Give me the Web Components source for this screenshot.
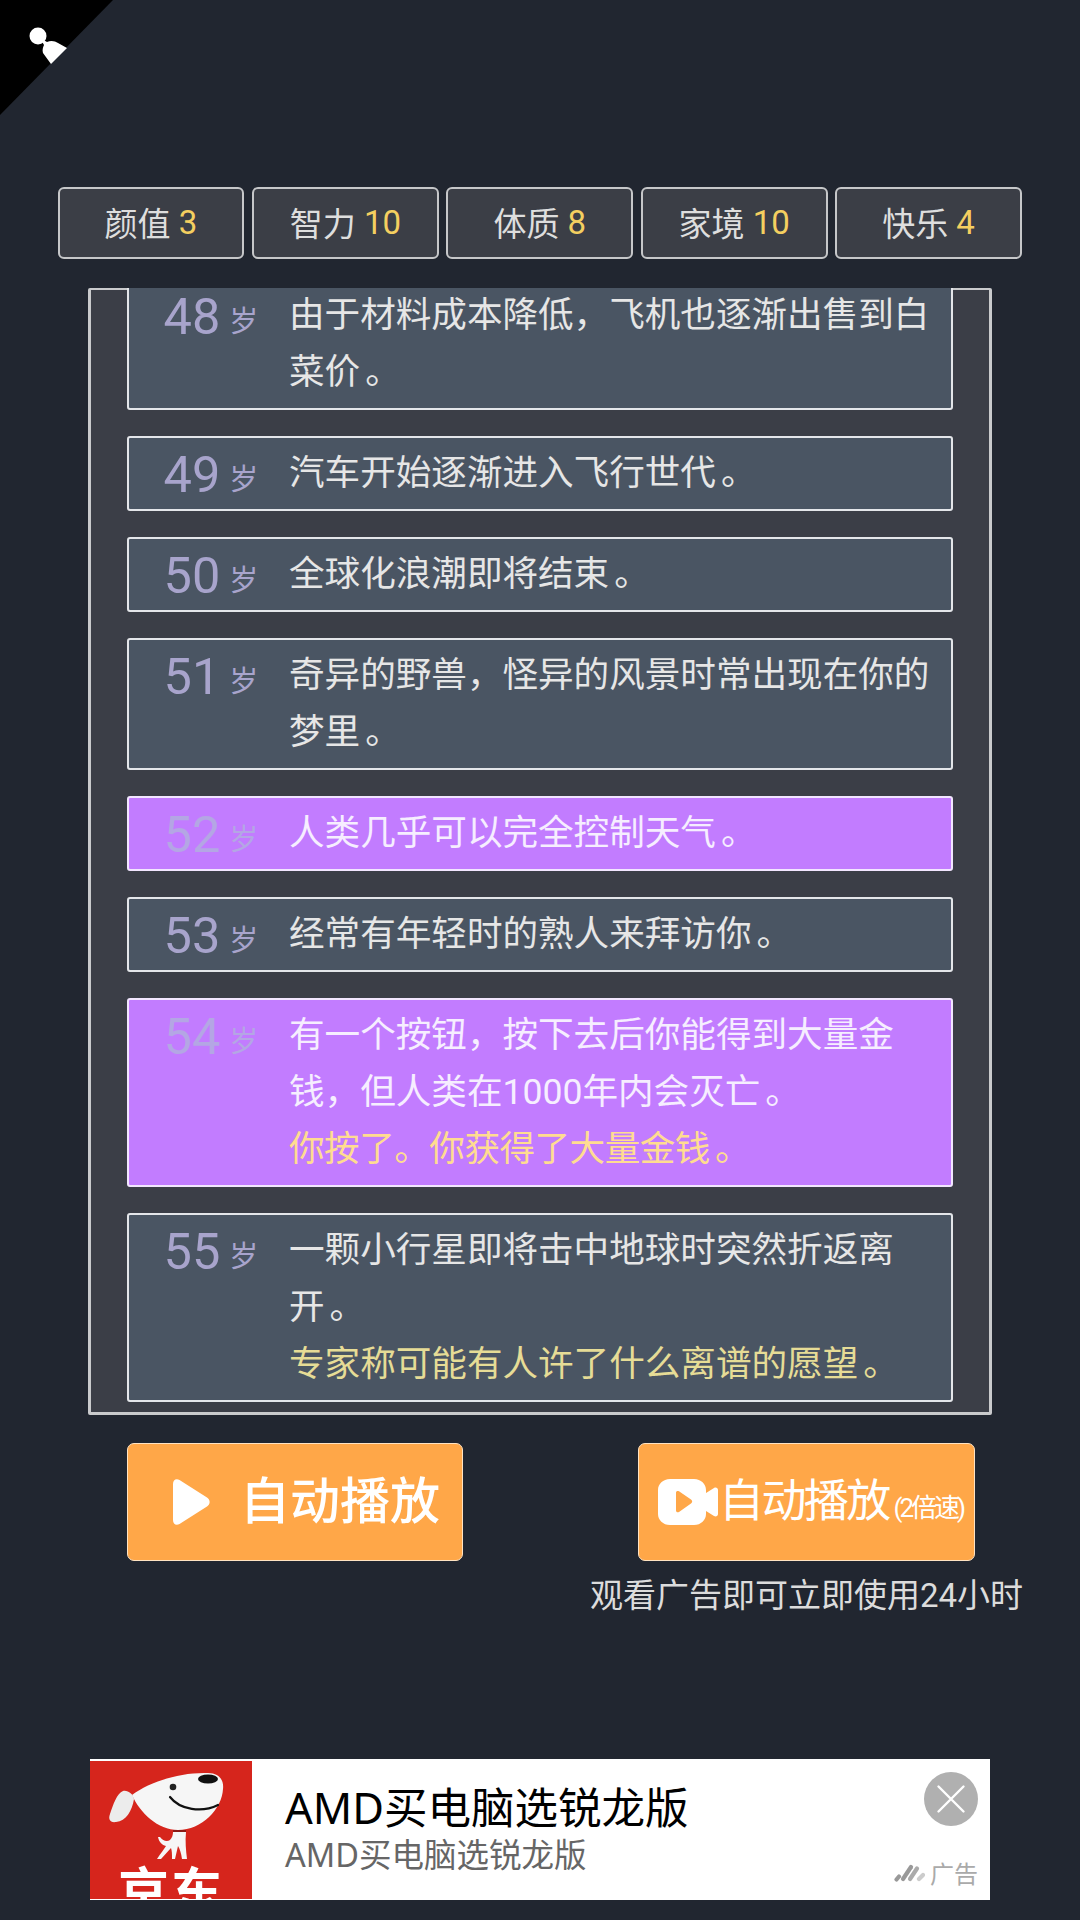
<!DOCTYPE html>
<html lang="zh">
<head>
<meta charset="utf-8">
<title>人生重开</title>
<style>
html, body { margin: 0; background: #212630; }
body { font-family: Roboto, "Noto Sans CJK SC", sans-serif; color: #e8e8e8; }
life-entry i { font-style: normal; margin-left: 5px; }
life-entry .tight { letter-spacing: -0.5px; }
</style>
</head>
<body>
<life-app>
  <life-corner slot="corner"></life-corner>
  <life-trait slot="traits" label="颜值" value="3"></life-trait>
  <life-trait slot="traits" label="智力" value="10"></life-trait>
  <life-trait slot="traits" label="体质" value="8"></life-trait>
  <life-trait slot="traits" label="家境" value="10"></life-trait>
  <life-trait slot="traits" label="快乐" value="4"></life-trait>
  <life-entry slot="log" age="48">由于材料成本降低，飞机也逐渐出售到白菜价<i>。</i></life-entry>
  <life-entry slot="log" age="49">汽车开始逐渐进入飞行世代<i>。</i></life-entry>
  <life-entry slot="log" age="50">全球化浪潮即将结束<i>。</i></life-entry>
  <life-entry slot="log" age="51">奇异的野兽，怪异的风景时常出现在你的梦里<i>。</i></life-entry>
  <life-entry slot="log" age="52" rare>人类几乎可以完全控制天气<i>。</i></life-entry>
  <life-entry slot="log" age="53">经常有年轻时的熟人来拜访你<i>。</i></life-entry>
  <life-entry slot="log" age="54" rare>有一个按钮，按下去后你能得到大量金钱，但人类在1000年内会灭亡<i>。</i><span slot="extra" class="tight">你按了。你获得了大量金钱<i>。</i></span></life-entry>
  <life-entry slot="log" age="55">一颗小行星即将击中地球时突然折返离开<i>。</i><span slot="extra">专家称可能有人许了什么离谱的愿望<i>。</i></span></life-entry>
  <life-play-button slot="play">自动播放</life-play-button>
  <life-play-button slot="video" kind="video">自动播放<span slot="note">(2倍速)</span></life-play-button>
  <life-ad slot="ad"></life-ad>
</life-app>

<script>
class LifeApp extends HTMLElement {
  constructor() {
    super();
    this.attachShadow({ mode: "open" });
    this.shadowRoot.innerHTML = `<style>
:host { display: block; position: relative; width: 1080px; height: 1920px; overflow: hidden; background: #212630; }
#traits { display: grid; grid-template-columns: repeat(5, 1fr); column-gap: 7.5px; margin: 187px 58px 0 57.5px; }
#panel { box-sizing: border-box; height: 1127px; margin: 29px 88px 0 88px; border: solid #c9cacc; border-width: 2px 3px 3px 3px; border-radius: 2px; background: #3b3e47; }
#log { box-sizing: border-box; height: 1124px; margin-top: -2px; padding: 0 36px 10px 36px; display: flex; flex-direction: column; justify-content: flex-end; gap: 26px; overflow: hidden; position: relative; }
#buttons { display: flex; gap: 175px; margin: 28px 0 0 127px; }
#hint { margin: 15px 57px 0 0; text-align: right; font-size: 33px; line-height: 40px; color: #dcdcdc; }
#ad { margin-top: 143px; }
</style>
<slot name="corner"></slot>
<div id="traits"><slot name="traits"></slot></div>
<div id="panel"><div id="log"><slot name="log"></slot></div></div>
<div id="buttons"><slot name="play"></slot><slot name="video"></slot></div>
<div id="hint">观看广告即可立即使用24小时</div>
<div id="ad"><slot name="ad"></slot></div>`;
  }
}

class LifeCorner extends HTMLElement {
  constructor() {
    super();
    this.attachShadow({ mode: "open" });
    this.shadowRoot.innerHTML = `<style>
:host { position: absolute; top: 0; left: 0; width: 114px; height: 116px; display: block; }
svg { display: block; }
</style>
<svg width="114" height="116" viewBox="0 0 114 116">
  <path d="M0 0H113L0 115Z" fill="#000"/>
  <circle cx="38" cy="36" r="8.500" fill="#fff"/>
  <path d="M40 38L47 42C51 40 55 41 58 43L67 48L51 64L43 53C42 50 43 47 44 45Z" fill="#fff"/>
</svg>`;
  }
}

class LifeTrait extends HTMLElement {
  constructor() {
    super();
    this.attachShadow({ mode: "open" });
    this.shadowRoot.innerHTML = `<style>
:host { display: flex; box-sizing: border-box; height: 72px; padding-bottom: 2px; align-items: center; justify-content: center; border: 2px solid #c6c7c9; border-radius: 6px; background: #3b3e46; font-size: 33px; color: #dedede; white-space: pre; }
b { font-weight: 400; color: #f4cf60; }
</style>
<span>${this.getAttribute("label")} </span><b>${this.getAttribute("value")}</b>`;
  }
}

class LifeEntry extends HTMLElement {
  constructor() {
    super();
    const rare = this.hasAttribute("rare");
    this.attachShadow({ mode: "open" });
    this.shadowRoot.innerHTML = `<style>
:host { display: flex; flex: none; align-items: flex-start; box-sizing: border-box; border: 2px solid ${rare ? "#f2e6ff" : "#e4e6ea"}; border-radius: 3px; padding: 7px 0; background: ${rare ? "#c27cff" : "#4a5563"}; font-size: 35.600px; line-height: 57px; color: ${rare ? "#f6eeff" : "#e6e6e6"}; }
#age { flex: none; box-sizing: border-box; width: 160px; height: 57px; padding: 8.500px 0 0 34.500px; white-space: nowrap; color: ${rare ? "#b4a6e4" : "#a8a4cc"}; font-size: 29px; }
#age b { font-weight: 400; font-size: 50.500px; line-height: 0; margin-right: 9px; }
#age span { line-height: 0; vertical-align: 2px; }
#text { flex: none; width: 645px; }
::slotted([slot="extra"]) { display: block; color: ${rare ? "#ffdc90" : "#e6dc96"}; }
</style>
<div id="age"><b>${this.getAttribute("age")}</b><span>岁</span></div>
<div id="text"><slot></slot><slot name="extra"></slot></div>`;
  }
}

class LifePlayButton extends HTMLElement {
  constructor() {
    super();
    const video = this.getAttribute("kind") === "video";
    const icon = video
      ? `<svg width="60" height="46" viewBox="0 0 60 46"><path d="M12 0H36C43 0 48 5 48 11V14L56 9C58 8 60 9 60 11V35C60 37 58 38 56 37L48 32V35C48 41 43 46 36 46H12C5 46 0 41 0 35V11C0 5 5 0 12 0Z" fill="#fff"/><path d="M18 13.500C18 12 19.500 11.500 21 12.200L33 20.500C34.600 21.600 34.600 23.400 33 24.500L21 33C19.500 33.800 18 33 18 31.500Z" fill="#ffa748"/></svg>`
      : `<svg width="37" height="46" viewBox="0 0 37 46"><path d="M0 5C0 1 3 -1 6.500 1L34 18.500C37.500 20.700 37.500 25.300 34 27.500L6.500 45C3 47 0 45 0 41Z" fill="#fff"/></svg>`;
    this.attachShadow({ mode: "open" });
    this.shadowRoot.innerHTML = `<style>
:host { display: flex; box-sizing: border-box; align-items: center; width: ${video ? 337 : 336}px; height: 117.500px; padding-left: ${video ? 19 : 45}px; border: 1.5px solid #ffe3c2; border-radius: 7px; background: #ffa748; color: #fff; white-space: nowrap; }
svg { flex: none; }
#label { margin-left: ${video ? 1 : 30}px; font-size: ${video ? 45 : 50}px; font-weight: ${video ? 400 : 500}; letter-spacing: ${video ? "-2.600px" : "0"}; line-height: 1; }
::slotted([slot="note"]) { font-size: 26px; font-weight: 400; letter-spacing: -3px; margin-left: 5px; }
</style>
${icon}<span id="label"><slot></slot><slot name="note"></slot></span>`;
  }
}

class LifeAd extends HTMLElement {
  constructor() {
    super();
    this.attachShadow({ mode: "open" });
    this.shadowRoot.innerHTML = `<style>
:host { display: flex; box-sizing: border-box; width: 900px; height: 141px; margin-left: 90px; background: #fff; padding-top: 2px; overflow: hidden; }
#logo { flex: none; width: 162px; height: 138px; background: #d6251c; overflow: hidden; }
#logo svg { display: block; }
#logo div { margin-top: -3px; font: 700 51px/60px "Noto Sans CJK SC", sans-serif; color: #fff; letter-spacing: 2px; text-align: center; white-space: nowrap; }
#copy { flex: 1; padding: 18px 0 0 33px; font-family: "Noto Sans", "Noto Sans CJK SC", sans-serif; }
#title { font-size: 43.500px; line-height: 56px; color: #000; }
#sub { font-size: 32.500px; line-height: 39px; color: #666; }
#side { display: flex; flex-direction: column; align-items: flex-end; justify-content: space-between; padding: 11px 12px 11px 0; }
#close { display: block; }
#tag { display: flex; align-items: center; gap: 5px; font-size: 24px; line-height: 32px; color: #aaa; font-family: "Noto Sans CJK SC", sans-serif; }
</style>
<div id="logo">
  <svg width="162" height="100" viewBox="0 0 162 100">
    <path d="M42 34C58 22 88 11 118 12C130 12 134 20 133 28C132 48 112 69 88 69C68 69 50 52 42 34Z" fill="#f6f6f6"/>
    <path d="M33 30C38 29 43 33 44 38C42 50 36 60 26 61C20 62 18 58 20 53C23 44 27 32 33 30Z" fill="#ececec"/>
    <circle cx="83" cy="26" r="3.300" fill="#222"/>
    <ellipse cx="118" cy="18" rx="10" ry="4.500" fill="#111"/>
    <path d="M80 36C90 49 112 52 128 44" fill="none" stroke="#111" stroke-width="2.200" stroke-linecap="round"/>
    <path d="M83 70H96" stroke="#8c1a16" stroke-width="2"/>
    <path d="M83 71H96C95 80 96 90 97 98H92C91 92 90 88 88 85L85 98H82C82 93 82 90 81 87L71 98H67C71 92 74 88 76 85C72 84 69 81 68 76L70 76C73 80 77 81 80 79C82 77 83 74 83 71Z" fill="#f6f6f6"/>
  </svg>
  <div>京东</div>
</div>
<div id="copy">
  <div id="title">AMD买电脑选锐龙版</div>
  <div id="sub">AMD买电脑选锐龙版</div>
</div>
<div id="side">
  <svg id="close" width="54" height="54" viewBox="0 0 54 54">
    <circle cx="27" cy="27" r="27" fill="#b0b0b0"/>
    <path d="M14.500 14.500L39.500 39.500M39.500 14.500L14.500 39.500" stroke="#fff" stroke-width="2.400" stroke-linecap="round"/>
  </svg>
  <div id="tag">
    <svg width="31" height="18" viewBox="0 0 31 18">
      <g fill="none" stroke-width="4.200" stroke-linecap="round">
        <path d="M2.500 15.500L5 12.500" stroke="#999"/>
        <path d="M9 15L17 3" stroke="#999"/>
        <path d="M16 15L23 4.500" stroke="#aaa"/>
        <path d="M25 15L29 11" stroke="#ccc"/>
      </g>
    </svg>
    <span>广告</span>
  </div>
</div>`;
  }
}

customElements.define("life-app", LifeApp);
customElements.define("life-corner", LifeCorner);
customElements.define("life-trait", LifeTrait);
customElements.define("life-entry", LifeEntry);
customElements.define("life-play-button", LifePlayButton);
customElements.define("life-ad", LifeAd);
</script>
</body>
</html>
